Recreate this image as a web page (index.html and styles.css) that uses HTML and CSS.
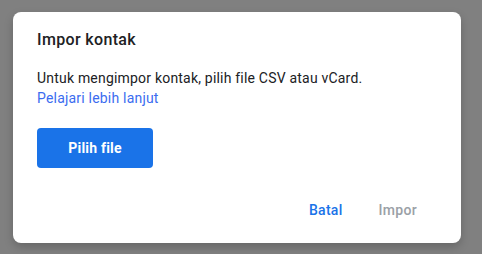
FILE: index.html
```html
<!DOCTYPE html>
<html lang="id">
<head>
    <meta charset="UTF-8">
    <meta name="viewport" content="width=device-width, initial-scale=1.0">
    <title>Impor kontak</title>
    <link rel="stylesheet" href="styles.css">
</head>
<body>
    <!-- 对话框 -->
    <div class="dialog">
        <h2 class="title">Impor kontak</h2>
        <div class="content">
            <p>Untuk mengimpor kontak, pilih file CSV atau vCard.</p>
            <a href="#" class="link">Pelajari lebih lanjut</a>
            <div>
                <button class="btn-primary">Pilih file</button>
            </div>
        </div>
        <div class="actions">
            <button class="btn-text">Batal</button>
            <button class="btn-text disabled">Impor</button>
        </div>
    </div>
</body>
</html>
```

FILE: styles.css
```css
*{
    margin: 0;
    padding: 0;
    box-sizing: border-box;
}

body{
    background-color: #808080;
    font-family: Roboto, "Liberation Sans", sans-serif;
    padding: 12px 21px 11px 13px;
}

.dialog{
    width: 448px;
    height: 231px;
    background-color: #fff;
    border-radius: 8px;
    box-shadow: 0 4px 10px rgba(0,0,0,0.2);
    padding: 16px 24px 15px 24px;
    display: flex;
    flex-direction: column;
}

.title{
    font-size: 16px;
    font-weight: 500;
    line-height: 24px;
    color: #202124;
    letter-spacing: 0.35px;
}

.content{
    margin-top: 16px;
    font-size: 14px;
    line-height: 20px;
    color: #202124;
    letter-spacing: 0.2px;
}

.link{
    color: #3b6cf0;
    text-decoration: none;
}

.btn-primary{
    margin-top: 20px;
    width: 116px;
    height: 40px;
    border: none;
    border-radius: 4px;
    background-color: #1a73e8;
    color: #fff;
    font-family: Roboto, "Liberation Sans", sans-serif;
    font-size: 14px;
    font-weight: 700;
    letter-spacing: 0.2px;
}

.actions{
    margin-top: auto;
    display: flex;
    justify-content: flex-end;
    gap: 4px;
    margin-right: 4px;
}

.btn-text{
    height: 36px;
    padding: 0 16px;
    border: none;
    background: none;
    color: #1a73e8;
    font-family: Roboto, "Liberation Sans", sans-serif;
    font-size: 14px;
    font-weight: 500;
    letter-spacing: 0.3px;
}

.btn-text.disabled{
    color: #9aa0a6;
}
```
